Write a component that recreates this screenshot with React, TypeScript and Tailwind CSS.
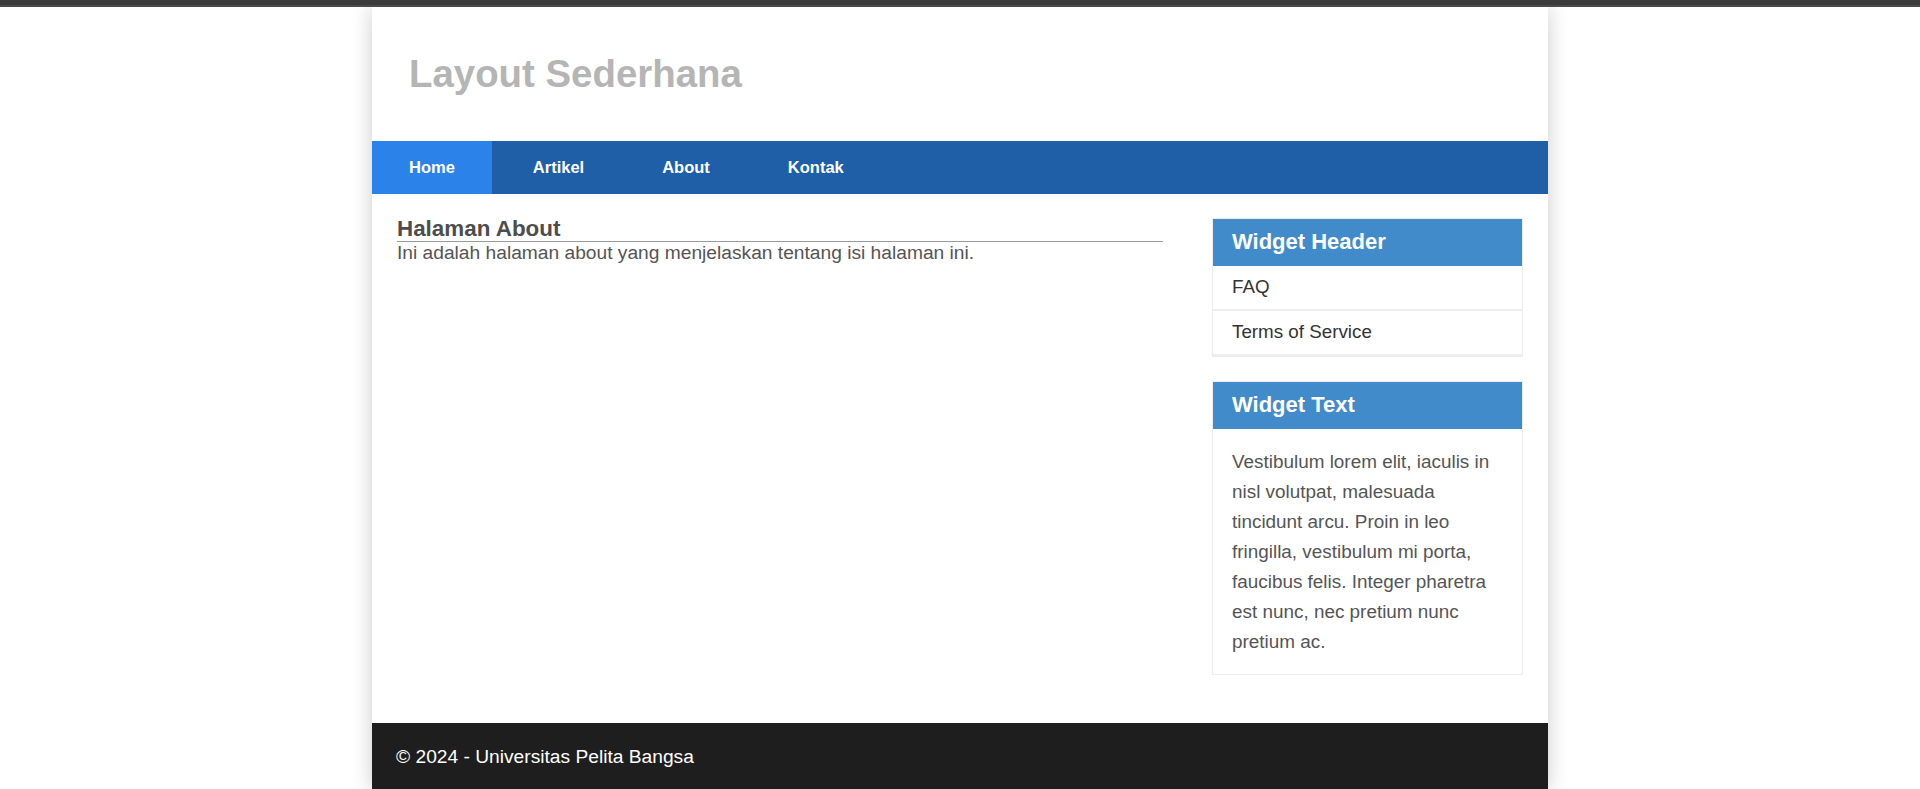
import React from "react";

const navItems = ["Home", "Artikel", "About", "Kontak"];

const App = () => {
  return (
    <div className="min-h-screen bg-white font-['Liberation_Sans',Arial,sans-serif]">
      <div className="relative z-10">
        <div className="h-[5px] bg-[#3b3b3b]" />
        <div className="h-[2px] bg-[#4a4a4a]" />
      </div>
      <div className="w-[1176px] mx-auto bg-white shadow-[0_0_20px_rgba(0,0,0,0.2)]">
        <header className="h-[134px] flex items-center pl-[37px]">
          <h1 className="text-[38.4px] font-bold text-[#b5b5b5] leading-none">
            Layout Sederhana
          </h1>
        </header>
        <nav className="h-[53px] bg-[#1f5fa8] flex gap-[4px]">
          {navItems.map((item, i) => (
            <a
              key={item}
              className={
                "h-full flex items-center px-[37px] text-white font-bold text-[16.5px] " +
                (i === 0 ? "bg-[#2b82e8]" : "")
              }
            >
              {item}
            </a>
          ))}
        </nav>
        <div className="flex px-[25px] pt-[23.5px] pb-[23.5px]">
          <main className="w-[766px] -mt-[1px]">
            <h2 className="text-[22.4px] font-bold text-[#4d4d4d] leading-[24.6px] border-b border-[#9a9a9a]">
              Halaman About
            </h2>
            <p className="text-[19.2px] text-[#555] leading-[21px]">
              Ini adalah halaman about yang menjelaskan tentang isi halaman ini.
            </p>
          </main>
          <aside className="w-[311px] ml-auto">
            <div className="border border-[#ececec] mb-[24px]">
              <div className="bg-[#428bca] px-[19px] h-[47px] flex items-center pb-[2px]">
                <h3 className="text-[22px] font-bold text-white">Widget Header</h3>
              </div>
              <ul>
                <li className="h-[45px] flex items-center px-[19px] border-b-2 border-[#eeeeee] text-[18.8px] text-[#333]">
                  FAQ
                </li>
                <li className="h-[45px] flex items-center px-[19px] border-b-2 border-[#eeeeee] text-[18.8px] text-[#333]">
                  Terms of Service
                </li>
              </ul>
            </div>
            <div className="border border-[#ececec] mb-[25px]">
              <div className="bg-[#428bca] px-[19px] h-[47px] flex items-center pb-[2px]">
                <h3 className="text-[22px] font-bold text-white">Widget Text</h3>
              </div>
              <p className="px-[19px] pt-[18px] pb-[17px] text-[18.9px] leading-[30px] text-[#555]">
                Vestibulum lorem elit, iaculis in nisl volutpat, malesuada tincidunt arcu. Proin in
                leo fringilla, vestibulum mi porta, faucibus felis. Integer pharetra est nunc, nec
                pretium nunc pretium ac.
              </p>
            </div>
          </aside>
        </div>
        <footer className="bg-[#1e1e1e] px-[24px] pt-[22.5px] pb-[24px]">
          <p className="text-[19.2px] text-white leading-[21.6px]">
            © 2024 - Universitas Pelita Bangsa
          </p>
        </footer>
      </div>
    </div>
  );
};

export default App;
